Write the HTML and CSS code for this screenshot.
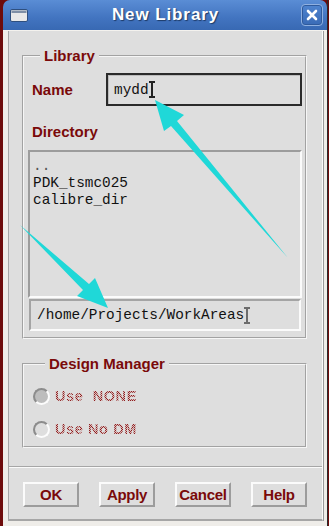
FILE: index.html
```html
<!DOCTYPE html>
<html lang="en">

<head>
    <meta charset="UTF-8">
    <meta name="viewport" content="width=device-width, initial-scale=1.0">
    <title>New Library</title>
    <link rel="stylesheet" href="styles.css">
</head>

<body>
    <div class="window">
        <!-- Title bar -->
        <div class="titlebar">
            <svg class="win-icon" width="18" height="13" viewBox="0 0 18 13">
                <rect x="0.5" y="0.5" width="17" height="12" rx="1.5" fill="#e8e8e8" stroke="#2e4f7f"/>
                <rect x="1.5" y="1.5" width="15" height="2.5" fill="#7f8fa6"/>
            </svg>
            <span class="title">New Library</span>
            <div class="close-btn">
                <svg width="12" height="12" viewBox="0 0 12 12">
                    <path d="M2 2 L10 10 M10 2 L2 10" stroke="#fff" stroke-width="2.6" stroke-linecap="round"/>
                </svg>
            </div>
        </div>

        <div class="frame">
            <div class="dialog">
                <fieldset class="group group-library">
                    <legend>Library</legend>

                    <div class="name-row">
                        <label class="field-label">Name</label>
                        <div class="name-input">mydd<span class="ibeam"></span></div>
                    </div>

                    <div class="field-label dir-label">Directory</div>

                    <div class="dir-list">
                        <div class="dots">..</div>
                        <div>PDK_tsmc025</div>
                        <div>calibre_dir</div>
                    </div>
                    <div class="path-box">/home/Projects/WorkAreas<span class="ibeam ibeam-dotted"></span></div>
                </fieldset>

                <fieldset class="group group-dm">
                    <legend>Design Manager</legend>
                    <div class="radio-row">
                        <span class="radio radio-on"></span>
                        <span class="radio-text">Use  NONE</span>
                    </div>
                    <div class="radio-row">
                        <span class="radio"></span>
                        <span class="radio-text">Use No DM</span>
                    </div>
                </fieldset>

                <div class="separator"></div>

                <div class="buttons">
                    <button>OK</button>
                    <button>Apply</button>
                    <button>Cancel</button>
                    <button>Help</button>
                </div>
            </div>
        </div>
    </div>

    <!-- annotation arrows laid over the dialog -->
    <svg class="arrows" width="329" height="526" viewBox="0 0 329 526">
        <polygon fill="#1fd8d8" points="155,100 184,115 177,121 288,258 171,126 164,131"/>
        <polygon fill="#1fd8d8" points="108,308 95,278 89,284 20,225 83,290 77,296"/>
    </svg>
</body>
</html>
```

FILE: styles.css
```css
/* Global */
* {
    margin: 0;
    padding: 0;
    box-sizing: border-box;
}

body {
    width: 329px;
    height: 526px;
    background-color: #6e0b0b;
    font-family: 'Liberation Sans', Arial, sans-serif;
    overflow: hidden;
    position: relative;
}

.window {
    margin-left: 3px;
    width: 325px;
    height: 526px;
    display: flex;
    flex-direction: column;
    border-right: 1px solid #2a2a2a;
}

/* Title bar */
.titlebar {
    height: 31px;
    background: linear-gradient(#5a8dd5, #4274c0 60%, #3869b3);
    border-radius: 7px 7px 0 0;
    display: flex;
    align-items: center;
    padding: 0 4px 0 7px;
    border-bottom: 1px solid #f4f2ee;
}

.win-icon {
    flex: none;
}

.title {
    flex: 1;
    text-align: center;
    color: #fff;
    font-weight: bold;
    font-size: 17px;
    letter-spacing: 0.9px;
    text-shadow: 1px 1px 1px #1d3a66;
    padding-left: 2px;
}

.close-btn {
    width: 22px;
    height: 22px;
    border: 1px solid #8fb0e0;
    border-radius: 4px;
    background: linear-gradient(#4f84cf, #3a6bb6);
    display: flex;
    align-items: center;
    justify-content: center;
    box-shadow: inset 0 0 0 1px #2f5a9c;
}

/* Frame around the dialog */
.frame {
    flex: 1;
    background-color: #efede9;
    padding: 0 4px 5px 5px;
    display: flex;
}

.dialog {
    flex: 1;
    background-color: #dedede;
    border-left: 1px solid #a6a6a6;
    border-right: 1px solid #fafafa;
    border-bottom: 2px solid #a6a6a6;
    box-shadow: 1px 0 0 #9a9a9a;
    padding: 0 15px 0 13px;
    display: flex;
    flex-direction: column;
}

/* Group boxes */
.group {
    border: 2px groove #f6f6f6;
    padding: 0 3px 0 4px;
    margin-top: 16px;
}

.group legend {
    color: #7a0a0a;
    font-weight: bold;
    font-size: 15px;
    line-height: 18px;
    margin-left: 12px;
    padding: 0 4px;
}

.group-library {
    padding-bottom: 6px;
}

.field-label {
    color: #7a0a0a;
    font-weight: bold;
    font-size: 15px;
    line-height: 18px;
    padding-left: 4px;
}

.name-row {
    display: flex;
    align-items: center;
    margin-top: 8px;
    height: 33px;
}

.name-row .field-label {
    width: 82px;
}

.name-input {
    flex: 1;
    height: 33px;
    border: 2px solid #2a2a2a;
    box-shadow: inset 1px 1px 0 #bcbcbc;
    font-family: 'Liberation Mono', 'Courier New', monospace;
    font-size: 14.4px;
    color: #111;
    display: flex;
    align-items: center;
    padding-left: 6px;
    margin-left: -4px;
}

/* text cursor */
.ibeam {
    display: inline-block;
    width: 6px;
    height: 17px;
    margin-left: -2px;
    position: relative;
    left: 2px;
    background:
        linear-gradient(#222, #222) top left / 6px 2px no-repeat,
        linear-gradient(#222, #222) bottom left / 6px 2px no-repeat;
}

.ibeam::before {
    content: "";
    display: block;
    width: 2px;
    height: 17px;
    margin-left: 2px;
    background-color: #222;
}

.ibeam-dotted {
    opacity: 0.6;
}

.dir-label {
    margin-top: 17px;
}

.dir-list {
    margin-top: 9px;
    height: 148px;
    border: 2px solid;
    border-color: #9c9c9c #fbfbfb #fbfbfb #9c9c9c;
    font-family: 'Liberation Mono', 'Courier New', monospace;
    font-size: 14.4px;
    line-height: 17px;
    color: #111;
    padding: 6px 0 0 3px;
}

.dir-list .dots {
    color: #555;
}

.path-box {
    height: 32px;
    margin: 1px 1px 0 1px;
    border: 2px solid;
    border-color: #a4a4a4 #fbfbfb #fbfbfb #a4a4a4;
    font-family: 'Liberation Mono', 'Courier New', monospace;
    font-size: 14.4px;
    color: #111;
    display: flex;
    align-items: center;
    padding-left: 6px;
}

/* Design manager */
.group-dm {
    padding: 0 0 7px 9px;
}

.radio-row {
    display: flex;
    align-items: center;
    height: 20px;
    margin-top: 13px;
}

.radio {
    width: 17px;
    height: 17px;
    border-radius: 50%;
    border: 2px solid;
    border-color: #8c8c8c #fcfcfc #fcfcfc #8c8c8c;
    margin-right: 5px;
}

.radio-on {
    background-color: #bdbdbd;
}

/* disabled, stippled label */
.radio-text {
    font-weight: bold;
    font-size: 14.5px;
    letter-spacing: 0.6px;
    white-space: pre;
    color: transparent;
    background: repeating-conic-gradient(#8e2020 0 25%, #d9b8b8 0 50%) 0 0 / 2px 2px;
    -webkit-background-clip: text;
    background-clip: text;
}

/* Bottom buttons */
.separator {
    margin: 18px -15px 0 -13px;
    border-top: 1px solid #a6a6a6;
    border-bottom: 1px solid #fafafa;
}

.buttons {
    display: flex;
    gap: 20px;
    margin-top: 14px;
    padding-left: 1px;
}

button {
    width: 56px;
    height: 25px;
    background-color: #dedede;
    border: 2px solid;
    border-color: #fbfbfb #9c9c9c #9c9c9c #fbfbfb;
    color: #7a0a0a;
    font-family: 'Liberation Sans', Arial, sans-serif;
    font-weight: bold;
    font-size: 15px;
    letter-spacing: -0.3px;
}

/* Annotation overlay */
.arrows {
    position: absolute;
    top: 0;
    left: 0;
    pointer-events: none;
}
```
